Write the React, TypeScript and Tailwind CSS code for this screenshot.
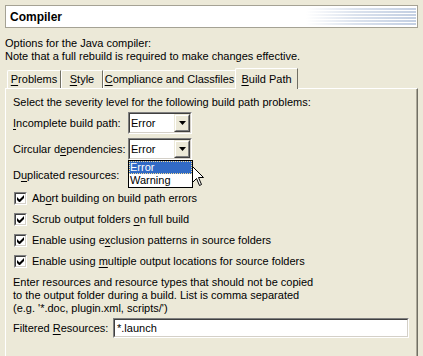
import React from "react";

const U = ({ c }: { c: string }) => (
  <span className="underline underline-offset-[2px] decoration-1">{c}</span>
);

function Combo({ text = "Error" }: { text?: string }) {
  return (
    <div className="w-[64px] h-[22px] border border-t-[#808080] border-l-[#808080] border-r-white border-b-white">
      <div className="w-full h-full border border-t-[#404040] border-l-[#404040] border-r-[#D4D0C8] border-b-[#D4D0C8] bg-white flex items-center">
        <span className="pl-[1px] flex-1 leading-[13px]">{text}</span>
        <div className="w-[16px] h-full bg-[#ECE9D8] border border-t-[#ECE9D8] border-l-[#ECE9D8] border-r-[#404040] border-b-[#404040]">
          <div className="w-full h-full border border-t-white border-l-white border-r-[#808080] border-b-[#808080] flex items-center justify-center">
            <svg width="7" height="4" viewBox="0 0 7 4">
              <path d="M0 0h7L3.5 4z" fill="#000" />
            </svg>
          </div>
        </div>
      </div>
    </div>
  );
}

function Check({ children }: { children: React.ReactNode }) {
  return (
    <div className="h-[21px] flex items-center">
      <div className="w-[13px] h-[13px] border border-t-[#808080] border-l-[#808080] border-r-white border-b-white ml-[1px]">
        <div className="w-full h-full border border-t-[#404040] border-l-[#404040] border-r-[#D4D0C8] border-b-[#D4D0C8] bg-white flex items-center justify-center">
          <svg width="7" height="7" viewBox="0 0 7 7">
            <path d="M0 2v3l2 2h1l4-4V0L2.5 4.5z" fill="#000" />
          </svg>
        </div>
      </div>
      <span className="ml-[5px] leading-[13px]">{children}</span>
    </div>
  );
}

function Tab({
  w,
  selected,
  children,
}: {
  w: string;
  selected?: boolean;
  children: React.ReactNode;
}) {
  return (
    <div
      className={
        (selected
          ? "h-[21px] -mb-[1px] relative z-10 bg-[#ECE9D8] "
          : "h-[18px] ") +
        w +
        " border-t border-l border-r border-t-white border-l-white border-r-[#716F64] rounded-tl-[2px] flex items-center justify-center leading-[13px]"
      }
    >
      {children}
    </div>
  );
}

export default function App() {
  return (
    <div
      className="w-[423px] h-[356px] bg-[#ECE9D8] overflow-hidden text-[11px] text-black relative"
      style={{ fontFamily: "Tahoma, 'Liberation Sans', Arial, sans-serif" }}
    >
      <div className="pt-[5px] px-[5px]">
        <div className="h-[23px] border border-[#A5A294] bg-white flex items-center relative overflow-hidden">
          <span className="pl-[4px] font-bold text-[12px] leading-[14px]">Compiler</span>
          <svg
            className="absolute right-[1px] top-0"
            width="110"
            height="21"
            viewBox="0 0 110 21"
          >
            <defs>
              <linearGradient id="fade" x1="0" x2="1" y1="0" y2="0">
                <stop offset="0" stopColor="#C3CFE2" stopOpacity="0" />
                <stop offset="0.45" stopColor="#C3CFE2" stopOpacity="0.6" />
                <stop offset="1" stopColor="#C3CFE2" stopOpacity="1" />
              </linearGradient>
            </defs>
            {[2, 5, 8, 11, 14, 17].map((y) => (
              <rect key={y} x="0" y={y} width="110" height="2" fill="url(#fade)" />
            ))}
          </svg>
        </div>

        <div className="mt-[9px] leading-[13px]">
          <div>Options for the Java compiler:</div>
          <div>Note that a full rebuild is required to make changes effective.</div>
        </div>

        <div className="mt-[5px] h-[20px] flex items-end pl-[2px]">
          <Tab w="w-[54px]">
            <span>
              <U c="P" />
              roblems
            </span>
          </Tab>
          <Tab w="w-[42px]">
            <span>
              <U c="S" />
              tyle
            </span>
          </Tab>
          <Tab w="w-[133px]">
            <span>
              <U c="C" />
              ompliance and Classfiles
            </span>
          </Tab>
          <Tab w="w-[63px] -ml-[1px]" selected>
            <span>
              <U c="B" />
              uild Path
            </span>
          </Tab>
        </div>

        <div className="h-[300px] border-t border-l border-r border-t-white border-l-white border-r-[#716F64] shadow-[inset_-1px_0_0_#ACA899] pl-[7px] pt-[7px] relative">
          <div className="leading-[13px]">
            Select the severity level for the following build path problems:
          </div>

          <div className="mt-[3px] flex flex-col gap-[4px]">
            <div className="h-[22px] flex items-center">
              <span className="w-[115px] leading-[13px]">
                <U c="I" />
                ncomplete build path:
              </span>
              <Combo />
            </div>
            <div className="h-[22px] flex items-center">
              <span className="w-[115px] leading-[13px]">
                Circular d<U c="e" />
                pendencies:
              </span>
              <div className="relative">
                <Combo />
                <div className="absolute left-0 top-[22px] w-[65px] border border-black bg-white z-20 leading-[13px]">
                  <div className="h-[13px] bg-[#316AC5] text-white outline-1 outline-dotted outline-[#F5DB95] -outline-offset-1 pl-[1px]">
                    Error
                  </div>
                  <div className="h-[13px] pl-[1px]">Warning</div>
                </div>
              </div>
            </div>
            <div className="h-[22px] flex items-center">
              <span className="w-[115px] leading-[13px]">
                D<U c="u" />
                plicated resources:
              </span>
              <Combo text="" />
            </div>
          </div>

          <div className="mt-[2px]">
            <Check>
              Ab<U c="o" />
              rt building on build path errors
            </Check>
            <Check>
              Scrub output folders <U c="o" />
              n full build
            </Check>
            <Check>
              Enable using e<U c="x" />
              clusion patterns in source folders
            </Check>
            <Check>
              Enable using <U c="m" />
              ultiple output locations for source folders
            </Check>
          </div>

          <div className="mt-[4px] leading-[13px]">
            <div>Enter resources and resource types that should not be copied</div>
            <div>to the output folder during a build. List is comma separated</div>
            <div>(e.g. '*.doc, plugin.xml, scripts/')</div>
          </div>

          <div className="mt-[3px] h-[20px] flex items-center">
            <span className="w-[100px] leading-[13px]">
              Filtered <U c="R" />
              esources:
            </span>
            <div className="w-[296px] h-[20px] border border-t-[#808080] border-l-[#808080] border-r-white border-b-white">
              <div className="w-full h-full border border-t-[#404040] border-l-[#404040] border-r-[#D4D0C8] border-b-[#D4D0C8] bg-white flex items-center pl-[2px] leading-[13px]">
                *.launch
              </div>
            </div>
          </div>
        </div>
      </div>

      <svg
        className="absolute left-[192px] top-[166px] z-30"
        width="13"
        height="21"
        viewBox="0 0 13 21"
      >
        <path
          d="M0.5 0.5V16.5L4.5 12.5L7.5 19.5L9.5 18.5L6.5 11.5H11.5Z"
          fill="#fff"
          stroke="#000"
          strokeWidth="1"
          strokeLinejoin="miter"
        />
      </svg>
    </div>
  );
}
